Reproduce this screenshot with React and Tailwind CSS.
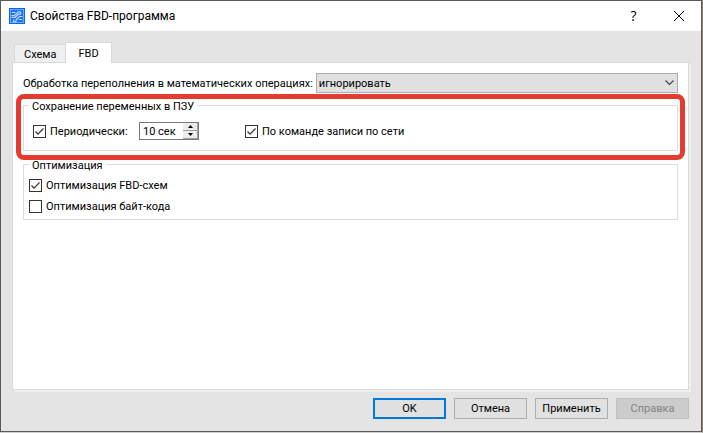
import { useState } from "react";

const TABS = ["Схема", "FBD"];

function AppIcon() {
  return (
    <svg width="16" height="16" viewBox="0 0 16 16" aria-hidden="true">
      <rect width="16" height="16" fill="#0a63f5" />
      <rect x="1.5" y="1.5" width="13" height="13" fill="#1a74f8" stroke="#6fabfc" />
      <g fill="none" stroke="#c4deff" strokeWidth="1.2" strokeLinecap="round">
        <path d="M3 7.500H5.500L9 4.200A1.500 1.500 0 1 1 11.500 6.200H9.500L6 9.300H3" />
        <path d="M3.500 4.500H6" />
        <path d="M13 8.500H10.500L7 11.800A1.400 1.400 0 1 1 4.500 12" />
        <path d="M10 11.500H12.500" />
      </g>
    </svg>
  );
}

function CheckBox({ label, defaultChecked }) {
  return (
    <label className="flex items-center gap-1">
      <span className="grid size-[13px] shrink-0">
        <input
          type="checkbox"
          defaultChecked={defaultChecked}
          className="peer col-start-1 row-start-1 size-[13px] appearance-none border border-[#333] bg-white"
        />
        <svg
          viewBox="0 0 13 13"
          className="pointer-events-none invisible col-start-1 row-start-1 size-[13px] peer-checked:visible"
          fill="none"
          stroke="#333"
          strokeWidth="1.2"
        >
          <path d="M2.500 6.500L5 9.200L10.500 3.500" />
        </svg>
      </span>
      <span className="pt-[2px]">{label}</span>
    </label>
  );
}

function GroupBox({ title, className, children }) {
  return (
    <fieldset className={`min-w-0 border border-[#dcdcdc] ${className}`}>
      <legend className="ml-[5px] px-[3px] pt-1 leading-3">{title}</legend>
      {children}
    </fieldset>
  );
}

function SpinBox({ label }) {
  const [seconds, setSeconds] = useState(10);

  return (
    <div className="flex h-[18px] w-[60px] border border-[#7a7a7a] bg-white">
      <input
        type="text"
        aria-label={label}
        value={`${seconds} сек`}
        onChange={(e) => setSeconds(parseInt(e.target.value, 10) || 0)}
        className="min-w-0 flex-1 pt-[2px] pl-[3px] outline-none"
      />
      <div className="flex w-[15px] flex-col bg-[#ececec]">
        <button
          type="button"
          aria-label="Больше"
          onClick={() => setSeconds(seconds + 1)}
          className="flex flex-1 items-center justify-center border-r border-b border-[#a0a0a0]"
        >
          <svg width="5" height="3" viewBox="0 0 5 3">
            <path d="M0 3L2.500 0L5 3Z" />
          </svg>
        </button>
        <button
          type="button"
          aria-label="Меньше"
          onClick={() => setSeconds(Math.max(0, seconds - 1))}
          className="flex flex-1 items-center justify-center border-r border-b border-[#a0a0a0]"
        >
          <svg width="5" height="3" viewBox="0 0 5 3">
            <path d="M0 0L2.500 3L5 0Z" />
          </svg>
        </button>
      </div>
    </div>
  );
}

export default function App() {
  const [tab, setTab] = useState("FBD");

  return (
    <div className="flex min-h-screen border-r border-b border-r-[#8a8375] border-b-[#d0d0d0]">
      <div className="flex min-w-0 flex-1 flex-col border border-[#5f5954] bg-[#e4e4e4] font-[Roboto,sans-serif] text-[11px] leading-4 text-black">
        <header className="flex h-[30px] items-center bg-white pl-2">
          <AppIcon />
          <h1 className="ml-[5px] flex-1 text-[12px]">Свойства FBD-программа</h1>
          <button
            type="button"
            aria-label="Помощь"
            className="h-full w-[45px] font-['Open_Sans',sans-serif] text-[14px] font-medium"
          >
            ?
          </button>
          <button
            type="button"
            aria-label="Закрыть"
            className="flex h-full w-[45px] items-center justify-center"
          >
            <svg width="10" height="10" viewBox="0 0 10 10" fill="none" stroke="#000">
              <path d="M0 0L10 10M10 0L0 10" />
            </svg>
          </button>
        </header>

        <main className="flex flex-1 flex-col pt-[11px] pr-3 pl-[11px]">
          <div role="tablist" className="flex items-end pl-[2px]">
            {TABS.map((name) => (
              <button
                key={name}
                type="button"
                role="tab"
                aria-selected={tab === name}
                onClick={() => setTab(name)}
                className={
                  tab === name
                    ? "z-10 -mb-px h-[21px] border border-b-0 border-[#d9d9d9] bg-white px-3 pt-[2px]"
                    : "h-[18px] border border-r-0 border-b-0 border-[#d9d9d9] bg-[#f0f0f0] px-[9px] pt-[2px]"
                }
              >
                {name}
              </button>
            ))}
          </div>

          <section className="flex flex-1 flex-col border border-[#d9d9d9] bg-white px-[10px] pt-[10px] shadow-[2px_2px_0_#f0f0f0]">
            <div className="flex items-center gap-[3px]">
              <label htmlFor="overflow" className="pt-[2px] whitespace-nowrap">
                Обработка переполнения в математических операциях:
              </label>
              <div className="grid min-w-0 flex-1 items-center">
                <select
                  id="overflow"
                  className="col-start-1 row-start-1 h-5 w-full appearance-none border border-[#adadad] bg-[#e1e1e1] pt-[2px] pl-[2px]"
                >
                  <option>игнорировать</option>
                </select>
                <svg
                  className="pointer-events-none col-start-1 row-start-1 mr-1 justify-self-end"
                  width="9"
                  height="6"
                  viewBox="0 0 9 6"
                  fill="none"
                  stroke="#444"
                  strokeWidth="1.2"
                >
                  <path d="M0.500 0.500L4.500 4.500L8.500 0.500" />
                </svg>
              </div>
            </div>

            <div className="-mx-[7px] mt-px rounded-lg border-[5px] border-[#e53a30] px-[2px] pb-1">
              <GroupBox title="Сохранение переменных в ПЗУ" className="-mt-[2px] h-[54px]">
                <div className="flex items-center pt-[9px] pl-[9px]">
                  <div className="flex w-[106px]">
                    <CheckBox label="Периодически:" defaultChecked />
                  </div>
                  <SpinBox label="Период" />
                  <div className="ml-[46px]">
                    <CheckBox label="По команде записи по сети" defaultChecked />
                  </div>
                </div>
              </GroupBox>
            </div>

            <GroupBox title="Оптимизация" className="-mt-1 h-[64px]">
              <div className="flex flex-col gap-[3px] pt-1 pl-[5px]">
                <CheckBox label="Оптимизация FBD-схем" defaultChecked />
                <CheckBox label="Оптимизация байт-кода" />
              </div>
            </GroupBox>
          </section>

          <footer className="flex justify-end gap-2 pt-2 pb-3">
            <button type="button" className="h-[21px] w-[73px] border-2 border-[#0078d7] bg-[#e1e1e1] pt-px">
              OK
            </button>
            <button type="button" className="h-[21px] w-[73px] border border-[#adadad] bg-[#e1e1e1] pt-px">
              Отмена
            </button>
            <button type="button" className="h-[21px] w-[73px] border border-[#adadad] bg-[#e1e1e1] pt-px">
              Применить
            </button>
            <button
              type="button"
              disabled
              className="h-[21px] w-[73px] border border-[#bfbfbf] bg-[#cccccc] pt-px text-[#838383]"
            >
              Справка
            </button>
          </footer>
        </main>
      </div>
    </div>
  );
}
